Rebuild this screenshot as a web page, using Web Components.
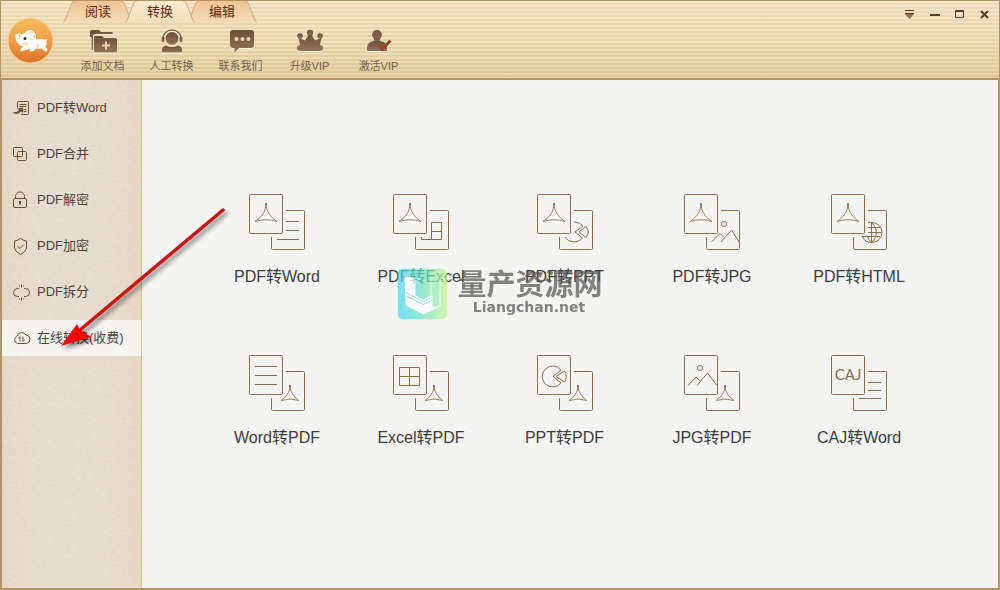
<!DOCTYPE html>
<html lang="zh-CN">
<head>
<meta charset="utf-8">
<title>PDF转换器</title>
<style>
html, body { margin: 0; height: 100%; }
body { font-family: "Liberation Sans", "Noto Sans CJK SC", sans-serif; background: #f4f4f2; }
</style>
</head>
<body>
<app-window>
  <app-header slot="header">
    <app-logo slot="logo"></app-logo>
    <nav-tab slot="tabs">阅读</nav-tab>
    <nav-tab slot="tabs" active>转换</nav-tab>
    <nav-tab slot="tabs">编辑</nav-tab>
    <tool-button slot="tools" icon="folder">添加文档</tool-button>
    <tool-button slot="tools" icon="agent">人工转换</tool-button>
    <tool-button slot="tools" icon="chat">联系我们</tool-button>
    <tool-button slot="tools" icon="crown">升级VIP</tool-button>
    <tool-button slot="tools" icon="activate">激活VIP</tool-button>
    <window-controls slot="controls"></window-controls>
  </app-header>
  <side-nav slot="side">
    <side-item icon="word">PDF转Word</side-item>
    <side-item icon="merge">PDF合并</side-item>
    <side-item icon="lock">PDF解密</side-item>
    <side-item icon="shield">PDF加密</side-item>
    <side-item icon="split">PDF拆分</side-item>
    <side-item icon="cloud" active>在线转换(收费)</side-item>
  </side-nav>
  <convert-grid>
    <convert-tile icon="to-word">PDF转Word</convert-tile>
    <convert-tile icon="to-excel">PDF转Excel</convert-tile>
    <convert-tile icon="to-ppt">PDF转PPT</convert-tile>
    <convert-tile icon="to-jpg">PDF转JPG</convert-tile>
    <convert-tile icon="to-html">PDF转HTML</convert-tile>
    <convert-tile icon="from-word">Word转PDF</convert-tile>
    <convert-tile icon="from-excel">Excel转PDF</convert-tile>
    <convert-tile icon="from-ppt">PPT转PDF</convert-tile>
    <convert-tile icon="from-jpg">JPG转PDF</convert-tile>
    <convert-tile icon="from-caj">CAJ转Word</convert-tile>
  </convert-grid>
  <site-watermark slot="overlay"></site-watermark>
  <pointer-arrow slot="overlay"></pointer-arrow>
</app-window>

<script>
const define = (name, render) => customElements.define(name, class extends HTMLElement {
  constructor() {
    super();
    this.attachShadow({ mode: "open" });
  }
  connectedCallback() {
    this.shadowRoot.innerHTML = render(this);
  }
});

const BUTTON_RESET = `button { font: inherit; color: inherit; border: 0; margin: 0; padding: 0; background: none; cursor: pointer; }`;

/* ---------- icon sets ---------- */

const TOOL_ICONS = {
  folder: `<path d="M1 2.500Q1 1 2.500 1H10l2 2H22.500Q24 3 24 5H7Q4 5 4 8V21H2.500V8H1Z"/>
    <path d="M5 8.500Q5 7 6.500 7H13l2 2H26.500Q28 9 28 10.500V22Q28 23.500 26.500 23.500H6.500Q5 23.500 5 22Z"/>
    <path d="M17 12.500V20.500M13 16.500H21" stroke="#ead6ac" stroke-width="2" fill="none"/>`,
  agent: `<circle cx="14" cy="9.500" r="6.500"/><path d="M5 9.500a9 8.500 0 0 1 18 0" fill="none" stroke="#806248" stroke-width="1.500"/>
    <rect x="3.500" y="7.500" width="3" height="6" rx="1.500"/><rect x="21.500" y="7.500" width="3" height="6" rx="1.500"/>
    <path d="M4 23.500V21q0-3.500 4-4.500q6 3 12 0q4 1 4 4.500V23.500Z"/>`,
  chat: `<path d="M5 1H24Q27 1 27 4V16Q27 19 24 19H12L7.500 24V19H6Q3 19 3 16V4Q3 1 6 1Z"/>
    <g fill="#ead6ac"><circle cx="9.500" cy="10" r="2"/><circle cx="15.500" cy="10" r="2"/><circle cx="21.500" cy="10" r="2"/></g>`,
  crown: `<circle cx="14" cy="4" r="3.200"/><circle cx="4" cy="7" r="2.800"/><circle cx="24" cy="7" r="2.800"/>
    <path d="M2.500 9 9 11.500 12.500 6H15.500L19 11.500 25.500 9 24 16q3 .5 3 3 0 3-3 3H4q-3 0-3-3 0-2.500 3-3Z"/>`,
  activate: `<circle cx="12" cy="6" r="5"/><path d="M9 9h6v4H9Z"/><path d="M2 22V19q0-6 7-7h6q7 1 7 7V22Z"/>
    <path d="M13.500 16.500 17.500 20.500 25.500 11.500" fill="none" stroke="#93452f" stroke-width="3"/>`
};

const SIDE_ICONS = {
  word: `<path d="M7.500 9V3.500Q7.500 2.500 8.500 2.500H17.500Q18.500 2.500 18.500 3.500V14.500Q18.500 15.500 17.500 15.500H11"/>
    <path d="M9.500 5.500H16.500M9.500 7.500H16.500M13.500 10.500H16.500M13.500 12.500H16.500"/>
    <path d="M2 13Q7 14 9 11L7.500 9.500 13 8.500 13 14 11 12.500Q7 17 2 13Z" fill="#6a5230" stroke="none"/>`,
  merge: `<rect x="3.500" y="2.500" width="9" height="9" rx="1"/><rect x="7.500" y="6.500" width="9" height="9" rx="1"/>`,
  lock: `<rect x="3.500" y="7.500" width="13" height="9" rx="1.500"/><path d="M5.500 7.500V5.500a4.500 4.500 0 0 1 9 0V7.500"/><path d="M10 10V13.500" stroke-width="2"/>`,
  shield: `<path d="M10.500 1.500Q14 4 16.500 4V11Q16.500 14 10.500 17.500Q4.500 14 4.500 11V4Q7 4 10.500 1.500Z"/><path d="M7.500 9.500 10 11.500 14 7.500"/>`,
  split: `<path d="M9 5.500H7.500a4 4 0 0 0 0 8H9M14 5.500H15.500a4 4 0 0 1 0 8H14"/><path d="M9.500 2.500V3.500M11.500 1.500V4.500M13.500 2.500V3.500M9.500 15.500V16.500M11.500 14.500V17.500M13.500 15.500V16.500"/>`,
  cloud: `<path d="M7.500 14.500a4 4 0 0 1-.5-7.500 5 5 0 0 1 9-1 4.300 4.300 0 0 1 .5 8.500Z"/><path d="M8 9.500 10 7.500V12.500M13 7.500V12.500L15 10.500"/>`
};

const FRONT = `<rect x=".5" y=".5" width="33" height="39" rx="1"/>`;
const BACK = `<path d="M37 16.500H54.500Q55.500 16.500 55.500 17.500V54.500Q55.500 55.500 54.500 55.500H23.500Q22.500 55.500 22.500 54.500V43"/>`;
const PDF_LARGE = `<path class="pdf" d="M16.500 9V14Q15 21.500 6 27.500Q17 24 28 27.500Q19 21.500 17.500 14V9"/>`;
const PDF_SMALL = `<path class="pdf" d="M40.500 30V35Q39 41 32 45.500Q41 42.500 50 45.500Q43 41 41.500 35V30"/>`;

const TILE_ICONS = {
  "to-word": PDF_LARGE + `<path d="M37 27.500H50M37 36.500H50M28 45.500H50"/>`,
  "to-excel": PDF_LARGE + `<path d="M28.500 43V45.500H48.500V28.500H38.500V45.500M38.500 37.500H48.500"/>`,
  "to-ppt": PDF_LARGE + `<path d="M37 28Q43 28 46 32L38 38 45.500 44A11 11 0 0 1 28 43"/><path d="M42 38 49 32.500Q53.500 38 49 43.500Z"/>`,
  "to-jpg": PDF_LARGE + `<circle cx="40" cy="30" r="2.500"/><path d="M27.500 48 36 39.500 39.500 43M37 48 47.500 36 55 48"/>`,
  "to-html": PDF_LARGE + `<path d="M37 28.500Q40 28 41 28.500A10 10 0 0 1 41 48.500Q34 48.500 31 42.500H49M37 33.500H49M37 38.500H51M40.500 28.500V48.500M41 28.500Q50 38.500 41 48.500M36.500 43Q38 47 41 48.500"/>`,
  "from-word": PDF_SMALL + `<path d="M6 11.500H28M6 20.500H28M6 29.500H28"/>`,
  "from-excel": PDF_SMALL + `<path d="M6.500 12.500H26.500V30.500H6.500ZM16.500 12.500V30.500M6.500 21.500H26.500"/>`,
  "from-ppt": PDF_SMALL + `<path d="M24 15A10.500 10.500 0 1 0 24 28L16 21.500Z"/><path d="M19 21.500 27.500 16Q31 21.500 27.500 27Z"/>`,
  "from-jpg": PDF_SMALL + `<circle cx="16" cy="13" r="2.500"/><path d="M4 30.500 12 22 16 26M13 30.500 23.500 18 33 30.500"/>`,
  "from-caj": `<text x="17" y="25">CAJ</text><path d="M37 27.500H50M37 35.500H50M28 43.500H50"/>`
};

/* ---------- frame ---------- */

define("app-window", () => `
<style>
:host { display: flex; flex-direction: column; position: relative; min-height: 100vh; box-sizing: border-box; border-bottom: 2px solid #b39464; background: #f4f4f2; }
.body { flex: 1; display: flex; border: solid #b39464; border-width: 0 2px; }
main { flex: 1; min-width: 0; border-top: 1px solid #fbf6ea; }
</style>
<slot name="header"></slot>
<div class="body"><slot name="side"></slot><main><slot></slot></main></div>
<slot name="overlay"></slot>`);

define("app-header", () => `
<style>
:host { display: flex; height: 80px; box-sizing: border-box; border: 1px solid #b39464; border-bottom-width: 2px; padding: 0 2px 0 5px;
  background: repeating-linear-gradient(#fff2 0 2px, #b28c441c 2px 4px), linear-gradient(#f6e4c4, #eedcb5 50%, #e3cd9b); }
.middle { display: flex; flex-direction: column; flex: 1; }
.tabs { display: flex; padding-left: 8px; }
.tools { display: flex; padding: 6px 0 0 13px; }
</style>
<slot name="logo"></slot>
<div class="middle">
  <div class="tabs" role="tablist"><slot name="tabs"></slot></div>
  <div class="tools"><slot name="tools"></slot></div>
</div>
<slot name="controls"></slot>`);

define("app-logo", () => `
<style>:host { display: block; padding-top: 15px; } svg { display: block; }</style>
<svg width="49" height="50" viewBox="7 16 49 50" aria-label="PDF" role="img">
  <defs><linearGradient id="g" x2="0" y2="1"><stop stop-color="#f5bd5c"/><stop offset=".5" stop-color="#f0a048"/><stop offset="1" stop-color="#de6e2b"/></linearGradient></defs>
  <circle cx="31.500" cy="41" r="24" fill="#f4d09c" opacity=".7"/>
  <circle cx="31.500" cy="40.500" r="22" fill="url(#g)"/>
  <path d="M16.500 35.500q0-2.500 1.500-1l1-1.500 2.500.5q0 1.500-1.500 2-1 2 .5 3.500 0-5 5-5.500 2-4 6.500-3.500 4.500 1 5 6.500v3q4.500-1.500 8 0 1.500.5 3-.5l-.5 3q1 2.500-1 4.500l2 3q0 2-2 2l-4-3q-2.500.5-5 0-3 3.500-6.500 3-1-1 0-2l.5-1-4.500 1.500q-4 2-6 .5 0-1.500 1.500-2.500l1.500-1.500q-3-.5-4-2.500-3.500-1.500-3.500-8.500Z" fill="#fffdf5"/>
  <path d="M29 34.500q1-3 3.500-2.500 3 1 3 5.500-1.500 3-4.500 1.500" fill="none" stroke="#f1d5a8"/>
  <circle cx="26" cy="38.500" r="1.500" fill="#283c42"/>
  <path d="M24 43.500q3 1 5 0M38 48q1-2 1-4" fill="none" stroke="#eab777" stroke-width=".8"/>
</svg>`);

define("nav-tab", el => {
  const on = el.hasAttribute("active");
  return `
<style>
${BUTTON_RESET}
:host { display: block; position: relative; z-index: ${on ? 2 : 1}; margin-right: -8px; color: #5f2a0b; font-size: 13px; }
button { display: grid; width: 70px; height: 22px; line-height: 22px; }
svg, span { grid-area: 1 / 1; }
</style>
<button role="tab" aria-selected="${on}">
<svg width="70" height="22" viewBox="0 0 70 22" aria-hidden="true">
<defs><linearGradient id="t" x2="0" y2="1"><stop stop-color="${on ? "#f9ebcf" : "#efc494"}"/><stop offset="1" stop-color="${on ? "#f0deb8" : "#f2dcb8"}"/></linearGradient></defs>
<path d="M0 22Q2 20 3 17L8 4Q9 0 12 0H58Q61 0 62 4L67 17Q68 20 70 22Z" fill="url(#t)"/>
<path d="M0 22Q2 20 3 17L8 4Q9 0 12 0M58 0Q61 0 62 4L67 17Q68 20 70 22" fill="none" stroke="#cfac78"/>
</svg><span><slot></slot></span></button>`;
});

define("tool-button", el => `
<style>
${BUTTON_RESET}
:host { display: block; color: #75604a; font-size: 11px; }
button { display: flex; flex-direction: column; align-items: center; width: 69px; line-height: 16px; gap: 5px; white-space: nowrap; }
svg { fill: url(#f); filter: drop-shadow(0 1px 0 #fff6dd); }
</style>
<button><svg width="28" height="24" viewBox="0 0 28 24" aria-hidden="true">
<defs><linearGradient id="f" x2="0" y2="1"><stop stop-color="#6b503b"/><stop offset="1" stop-color="#94745a"/></linearGradient></defs>
${TOOL_ICONS[el.getAttribute("icon")]}</svg><slot></slot></button>`);

define("window-controls", () => `
<style>
${BUTTON_RESET}
:host { display: flex; height: 26px; }
button { width: 25px; display: grid; place-items: center; }
svg { fill: none; stroke: #5b3d20; stroke-width: 2; }
</style>
<button aria-label="菜单"><svg width="9" height="9" viewBox="0 0 9 9"><path d="M0 .5H9M0 3.500H9" stroke-width="1"/><path d="M0 4H9L4.500 9Z" fill="#8a6b4c" stroke="none"/></svg></button>
<button aria-label="最小化"><svg width="10" height="9" viewBox="0 0 10 9"><path d="M0 5H10"/></svg></button>
<button aria-label="最大化"><svg width="9" height="9" viewBox="0 0 9 9"><path d="M.5 0V7.500H8.500V0" stroke-width="1"/><path d="M0 1H9"/></svg></button>
<button aria-label="关闭"><svg width="9" height="9" viewBox="0 0 9 9"><path d="M1 1 8 8M8 1 1 8"/></svg></button>`);

/* ---------- sidebar ---------- */

define("side-nav", () => `
<style>
:host { display: block; position: relative; flex: none; width: 140px; box-sizing: border-box; border-right: 1px solid #d8bd88;
  background: linear-gradient(90deg, #e8dac6, #e8dfd3 25%, #e8dfd3 75%, #e8d9c5); }
.paper { position: absolute; inset: 0; width: 100%; height: 100%; opacity: .14; }
nav { position: relative; display: flex; flex-direction: column; gap: 10px; padding-top: 10px; }
</style>
<svg class="paper" aria-hidden="true"><filter id="n" x="0" y="0" width="100%" height="100%"><feTurbulence type="fractalNoise" baseFrequency=".2 .4" numOctaves="3" seed="4"/><feColorMatrix values="0 0 0 0 .55  0 0 0 0 .45  0 0 0 0 .35  1.600 0 0 0 -.35"/></filter><rect width="100%" height="100%" filter="url(#n)"/></svg>
<nav><slot></slot></nav>`);

define("side-item", el => `
<style>
:host { display: block; font-size: 13px; }
a { display: flex; align-items: center; gap: 5px; height: 36px; padding-left: 10px; box-sizing: border-box; color: #4d4439; text-decoration: none; white-space: nowrap; }
a.on { background: #f5f4f1; }
span { padding-bottom: 3px; }
svg { fill: none; stroke: #6a5230; stroke-width: 1; }
</style>
<a href="#" class="${el.hasAttribute("active") ? "on" : ""}"><svg width="20" height="18" viewBox="2 0 20 18" overflow="visible" aria-hidden="true">${SIDE_ICONS[el.getAttribute("icon")]}</svg><span><slot></slot></span></a>`);

/* ---------- conversion tiles ---------- */

define("convert-grid", () => `
<style>
:host { display: grid; grid-template-columns: 144fr 144fr 143fr 152fr 142fr; row-gap: 68px; padding: 113px 68px 0 63px; }
</style><slot></slot>`);

define("convert-tile", el => `
<style>
${BUTTON_RESET}
:host { display: flex; justify-content: center; color: #3c3c3c; font-size: 16px; }
button { display: flex; flex-direction: column; align-items: center; gap: 17px; line-height: 20px; white-space: nowrap; }
svg { fill: none; stroke: #8a6d4b; stroke-width: 1; }
.pdf { stroke: #9a8460; stroke-linejoin: round; }
text { font: 15px Lato, sans-serif; fill: #8a6d4b; stroke: none; text-anchor: middle; }
</style>
<button><svg width="56" height="56" viewBox="0 0 56 56" aria-hidden="true">${FRONT}${BACK}${TILE_ICONS[el.getAttribute("icon")]}</svg><span><slot></slot></span></button>`);

/* ---------- overlays ---------- */

define("site-watermark", () => `
<style>
:host { position: absolute; left: 50%; top: 50%; transform: translate(-50%, -50%); display: flex; gap: 8px; align-items: center; opacity: .72; pointer-events: none; color: #555; font-weight: bold; text-align: center; white-space: nowrap; }
.cn { font-size: 29px; line-height: 30px; padding-left: 2px; }
.en { font-family: "DejaVu Sans", sans-serif; font-size: 14px; line-height: 14px; padding-bottom: 6px; }
svg { display: block; }
</style>
<svg width="50" height="51" viewBox="0 0 50 51" aria-hidden="true">
<defs><linearGradient id="w"><stop stop-color="#47d5f5"/><stop offset=".5" stop-color="#6ee5c4"/><stop offset="1" stop-color="#c8f78a"/></linearGradient></defs>
<rect width="50" height="51" rx="6" fill="url(#w)"/>
<path d="M7 7 18 10V27L26 31 35 27 43 22V38L26 46 8 37Z" fill="#fff"/>
<path d="M6 23 26 33 33 30M6 26 26 36 43 28" fill="none" stroke="#6ee5d0"/>
<path d="M33.500 8V27L27 31M42.500 7V38" fill="none" stroke="#fff"/>
<path d="M34 7H42V36L35 39V28Z" fill="#98edb0"/>
</svg>
<div><div class="cn">量产资源网</div><div class="en">Liangchan.net</div></div>`);

define("pointer-arrow", () => `
<style>:host { position: absolute; left: 56px; top: 202px; pointer-events: none; } svg { display: block; filter: drop-shadow(3px 3px 2px #0007); }</style>
<svg width="180" height="156" viewBox="56 202 180 156" aria-hidden="true">
<path d="M223 210 80 330" stroke="#cc1418" stroke-width="3.500" stroke-linecap="round"/>
<path d="M61 346 77 324 80 330 91 337Z" fill="#f00808"/>
</svg>`);
</script>
</body>
</html>
